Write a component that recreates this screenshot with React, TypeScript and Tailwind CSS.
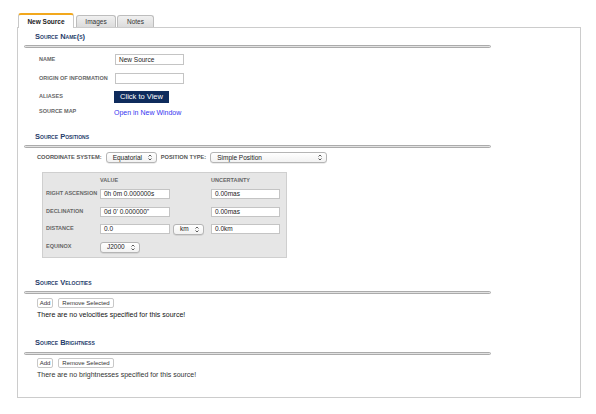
import React from "react";

const Arrows = () => (
  <svg width="4" height="7" viewBox="0 0 4 7" className="shrink-0">
    <path d="M0.5 2.5 L2 1 L3.5 2.5" fill="none" stroke="#333" strokeWidth="0.8" />
    <path d="M0.5 4.5 L2 6 L3.5 4.5" fill="none" stroke="#333" strokeWidth="0.8" />
  </svg>
);

const Select = ({ text, w, h = "h-[11px]" }: { text: string; w: string; h?: string }) => (
  <div
    className={`${w} ${h} flex items-center justify-between rounded-[3px] border border-[#b5b5b5] bg-gradient-to-b from-white to-[#f2f2f2] pl-[6px] pr-[4px] text-[6.5px] text-[#222] shadow-[0_0.5px_0.5px_rgba(0,0,0,0.15)]`}
  >
    <span>{text}</span>
    <Arrows />
  </div>
);

const Input = ({ value, w }: { value?: string; w: string }) => (
  <div className={`${w} h-full flex items-center border border-[#c4c4c4] bg-white pl-[3px] text-[6.5px] text-[#222]`}>
    {value}
  </div>
);

const Heading = ({ children }: { children: React.ReactNode }) => (
  <div className="ml-[11px] h-[10px] flex items-center text-[7.5px] font-bold [font-variant:small-caps] text-[#1f3c6b] leading-none">
    {children}
  </div>
);

const Rule = ({ mt = "mt-[3px]" }: { mt?: string }) => (
  <div className={`${mt} h-[3px] w-[467px] rounded-full border border-[#ababab] bg-[#e2e2e2]`} />
);

const Label = ({ children, w }: { children: React.ReactNode; w: string }) => (
  <div className={`${w} shrink-0 text-[5.5px] font-bold uppercase text-[#666] leading-none`}>{children}</div>
);

const Btn = ({ children, w }: { children: React.ReactNode; w: string }) => (
  <div className={`${w} h-full flex items-center justify-center rounded-[2px] border border-[#c8c8c8] bg-white text-[6px] text-[#333]`}>
    {children}
  </div>
);

export default function App() {
  return (
    <div className="w-[596px] h-[414px] bg-white pt-[13px] pl-[17px] font-['Liberation_Sans',Arial,sans-serif]">
      {/* Tabs */}
      <div className="flex items-end h-[14px] ml-[1px]">
        <div className="relative z-10 -mb-px w-[56px] h-[15px] rounded-t-[3px] border-t-2 border-t-[#f2a81d] border-x border-x-[#c8c8c8] bg-white flex items-center justify-center text-[6.5px] font-bold text-[#222]">
          New Source
        </div>
        <div className="ml-[2px] w-[40px] h-[12px] rounded-t-[3px] border border-[#bdbdbd] border-b-0 bg-gradient-to-b from-[#f0f0f0] to-[#dcdcdc] flex items-center justify-center text-[6.5px] text-[#333]">
          Images
        </div>
        <div className="ml-[1px] w-[37px] h-[12px] rounded-t-[3px] border border-[#bdbdbd] border-b-0 bg-gradient-to-b from-[#f0f0f0] to-[#dcdcdc] flex items-center justify-center text-[6.5px] text-[#333]">
          Notes
        </div>
      </div>

      {/* Panel */}
      <div className="w-[564px] h-[371px] border border-[#cccccc] pl-[6px] pt-[4px]">
        <Heading>Source Name(s)</Heading>
        <Rule />

        <div className="ml-[15px] mt-[6px] flex items-center h-[11px]">
          <Label w="w-[76px]">Name</Label>
          <Input value="New Source" w="w-[69px]" />
        </div>
        <div className="ml-[15px] mt-[8px] flex items-center h-[11px]">
          <Label w="w-[76px]">Origin of Information</Label>
          <Input w="w-[69px]" />
        </div>
        <div className="ml-[15px] mt-[7px] flex items-center h-[12px]">
          <Label w="w-[75px]">Aliases</Label>
          <div className="w-[55px] h-full bg-[#0e2b5c] flex items-center justify-center text-[7.5px] text-white">
            Click to View
          </div>
        </div>
        <div className="ml-[15px] mt-[4px] flex items-center h-[10px]">
          <Label w="w-[75px]">Source Map</Label>
          <span className="text-[7px] text-[#3535f0] leading-none">Open in New Window</span>
        </div>

        <div className="mt-[15px]">
          <Heading>Source Positions</Heading>
        </div>
        <Rule />

        <div className="ml-[13px] mt-[4px] flex items-center h-[11px]">
          <span className="text-[5.7px] font-bold uppercase text-[#555] leading-none">Coordinate System:</span>
          <div className="ml-[4px]">
            <Select text="Equatorial" w="w-[51px]" />
          </div>
          <span className="ml-[4px] text-[5.7px] font-bold uppercase text-[#555] leading-none">Position Type:</span>
          <div className="ml-[4px]">
            <Select text="Simple Position" w="w-[117px]" />
          </div>
        </div>

        {/* Gray box */}
        <div className="ml-[18px] mt-[9px] w-[245px] h-[86px] border border-[#cfcfcf] bg-[#e6e6e6] pl-[3px] pt-[4px]">
          <div className="flex items-center h-[8px] mb-[4px]">
            <div className="w-[54px]" />
            <div className="w-[111px] text-[5.5px] font-bold text-[#666] leading-none">VALUE</div>
            <div className="text-[5.5px] font-bold text-[#666] leading-none">UNCERTAINTY</div>
          </div>
          <div className="flex items-center h-[10px]">
            <Label w="w-[54px]">Right Ascension</Label>
            <Input value="0h 0m 0.000000s" w="w-[70px]" />
            <div className="w-[41px]" />
            <Input value="0.00mas" w="w-[69px]" />
          </div>
          <div className="flex items-center h-[10px] mt-[8px]">
            <Label w="w-[54px]">Declination</Label>
            <Input value={"0d 0' 0.000000\""} w="w-[70px]" />
            <div className="w-[41px]" />
            <Input value="0.00mas" w="w-[69px]" />
          </div>
          <div className="flex items-center h-[10px] mt-[7px]">
            <Label w="w-[54px]">Distance</Label>
            <Input value="0.0" w="w-[70px]" />
            <div className="ml-[3px] mr-[7px]">
              <Select text="km" w="w-[31px]" />
            </div>
            <Input value="0.0km" w="w-[69px]" />
          </div>
          <div className="flex items-center h-[10px] mt-[8px]">
            <Label w="w-[54px]">Equinox</Label>
            <Select text="J2000" w="w-[40px]" />
          </div>
        </div>

        <div className="mt-[20px]">
          <Heading>Source Velocities</Heading>
        </div>
        <Rule />
        <div className="ml-[13px] mt-[4px] flex gap-[5px] h-[10px]">
          <Btn w="w-[16px]">Add</Btn>
          <Btn w="w-[56px]">Remove Selected</Btn>
        </div>
        <div className="ml-[13px] mt-[1px] h-[10px] flex items-center text-[7px] text-[#111] leading-none">
          There are no velocities specified for this source!
        </div>

        <div className="mt-[19px]">
          <Heading>Source Brightness</Heading>
        </div>
        <Rule mt="mt-[4px]" />
        <div className="ml-[13px] mt-[3px] flex gap-[5px] h-[10px]">
          <Btn w="w-[16px]">Add</Btn>
          <Btn w="w-[56px]">Remove Selected</Btn>
        </div>
        <div className="ml-[13px] mt-[1px] h-[10px] flex items-center text-[7px] text-[#333] leading-none">
          There are no brightnesses specified for this source!
        </div>
      </div>
    </div>
  );
}
